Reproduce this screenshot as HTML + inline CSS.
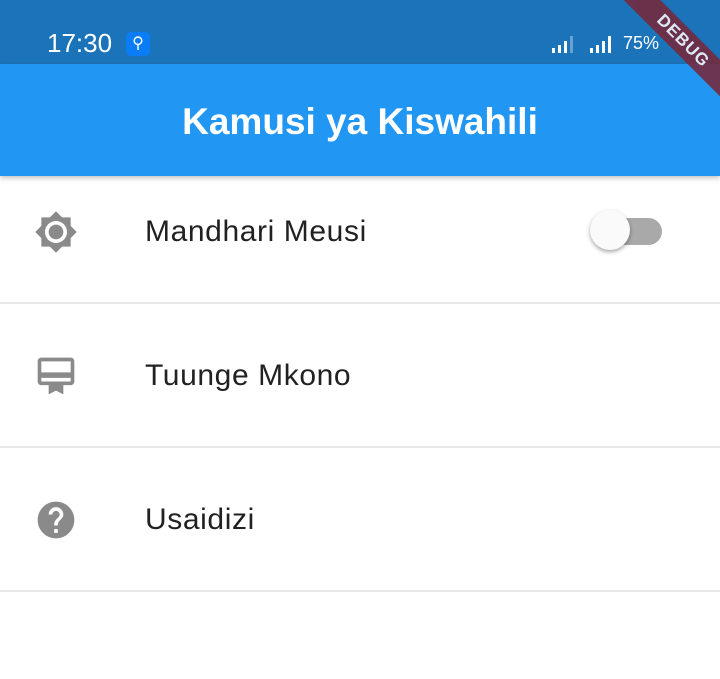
<!DOCTYPE html>
<html><head><meta charset="utf-8"><style>
body{margin:0;width:720px;height:679px;overflow:hidden;background:#fff;font-family:"Liberation Sans",Roboto,sans-serif;position:relative}
.sb{position:absolute;left:0;top:0;width:720px;height:64px;background:#1b74ba}
.ab{position:absolute;left:0;top:64px;width:720px;height:112px;background:#2196f3;box-shadow:0 2px 5px rgba(0,0,0,.25);z-index:2}
.ab h1{margin:0;text-align:center;color:#fff;font-weight:bold;font-size:37px;line-height:116px;letter-spacing:0}
.t{position:absolute;left:47px;top:27px;color:#fff;font-size:26px;line-height:32px}
.row{position:absolute;left:0;width:720px;border-bottom:2px solid #e8e8e8}
.lbl{position:absolute;left:145px;font-size:30px;letter-spacing:0.6px;color:#212121}
.ic{position:absolute;left:34px}
.debug{position:absolute;right:-58px;top:28px;width:190px;height:26px;background:#7a2638;opacity:.85;transform:rotate(45deg);color:#fff;font-size:17px;font-weight:bold;text-align:center;line-height:26px;z-index:3;letter-spacing:1px}
</style></head><body>
<div class="sb">
<div class="t">17:30</div>
<div style="position:absolute;left:126px;top:32px;width:24px;height:24px;background:#0a7cf5;border-radius:5px;color:#fff;font-size:16px;text-align:center;line-height:24px">⚲</div>
<svg style="position:absolute;left:552px;top:36px" width="70" height="18"><g fill="#fff">
<rect x="0" y="12" width="3" height="5"/><rect x="6" y="9" width="3" height="8"/><rect x="12" y="5" width="3" height="12"/><rect x="18" y="0" width="3" height="17" fill="#6aa0d0"/>
<rect x="38" y="12" width="3" height="5"/><rect x="44" y="9" width="3" height="8"/><rect x="50" y="5" width="3" height="12"/><rect x="56" y="0" width="3" height="17"/></g></svg>
<div style="position:absolute;left:623px;top:33px;color:#fff;font-size:18px">75%</div>
</div>
<div class="debug">DEBUG</div>
<div class="ab"><h1>Kamusi ya Kiswahili</h1></div>

<div class="row" style="top:176px;height:126px">
<svg class="ic" style="top:34px" width="44" height="44" viewBox="0 0 24 24"><path fill="#8a8a8a" d="M20 8.69V4h-4.69L12 .69 8.69 4H4v4.69L.69 12 4 15.31V20h4.69L12 23.31 15.31 20H20v-4.69L23.31 12 20 8.69zM12 18c-3.31 0-6-2.69-6-6s2.69-6 6-6 6 2.69 6 6-2.69 6-6 6zm0-10c-2.21 0-4 1.79-4 4s1.79 4 4 4 4-1.79 4-4-1.79-4-4-4z"/></svg>
<div class="lbl" style="top:39px">Mandhari Meusi</div>
<div style="position:absolute;left:600px;top:42px;width:62px;height:27px;background:#a9a9a9;border-radius:14px"></div>
<div style="position:absolute;left:590px;top:34px;width:40px;height:40px;background:#fafafa;border-radius:50%;box-shadow:0 2px 4px rgba(0,0,0,.35)"></div>
</div>

<div class="row" style="top:304px;height:142px">
<svg class="ic" style="top:50px" width="44" height="44" viewBox="0 0 24 24"><path fill="#8a8a8a" d="M20 2H4c-1.11 0-2 .89-2 2v11c0 1.11.89 2 2 2h4v5l4-2 4 2v-5h4c1.11 0 2-.89 2-2V4c0-1.11-.89-2-2-2zm0 13H4v-2h16v2zm0-5H4V4h16v6z"/></svg>
<div class="lbl" style="top:55px">Tuunge Mkono</div>
</div>

<div class="row" style="top:448px;height:142px">
<svg class="ic" style="top:50px" width="44" height="44" viewBox="0 0 24 24"><path fill="#8a8a8a" d="M12 2C6.48 2 2 6.48 2 12s4.48 10 10 10 10-4.48 10-10S17.52 2 12 2zm1 17h-2v-2h2v2zm2.070-7.75l-.9.92C13.45 12.9 13 13.5 13 15h-2v-.5c0-1.1.45-2.1 1.17-2.83l1.24-1.26c.37-.36.59-.86.59-1.410 0-1.1-.9-2-2-2s-2 .9-2 2H8c0-2.21 1.79-4 4-4s4 1.79 4 4c0 .88-.36 1.68-.93 2.25z"/></svg>
<div class="lbl" style="top:55px">Usaidizi</div>
</div>
</body></html>
